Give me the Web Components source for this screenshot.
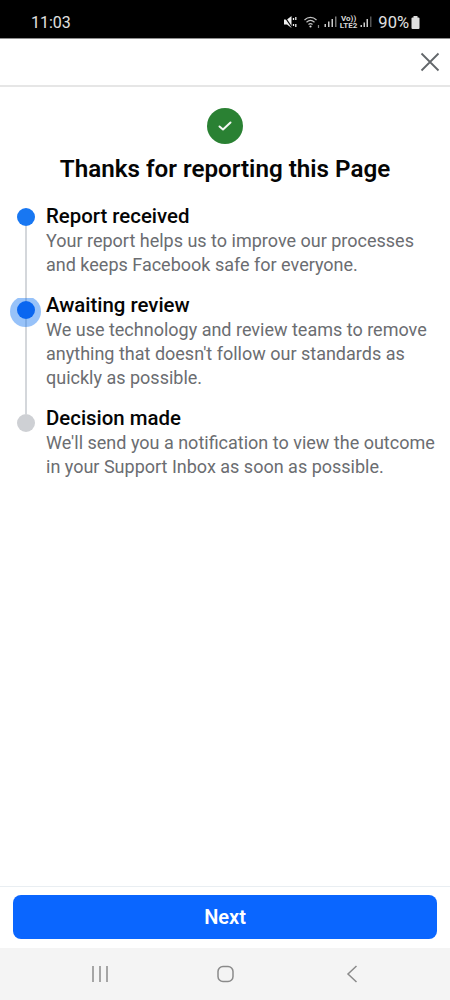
<!DOCTYPE html>
<html>
<head>
<meta charset="utf-8">
<title>Report</title>
<style>
  html, body { margin: 0; padding: 0; background: #fff; }
  body { font-family: Roboto, "Liberation Sans", sans-serif; }
</style>
</head>
<body>
<report-screen>
  <status-bar slot="top"></status-bar>
  <top-bar slot="top"></top-bar>
  <report-head>Thanks for reporting this Page</report-head>
  <report-step state="done" heading="Report received">Your report helps us to improve our processes and keeps Facebook safe for everyone.</report-step>
  <report-step state="active" heading="Awaiting review">We use technology and review teams to remove anything that doesn't follow our standards as quickly as possible.</report-step>
  <report-step state="todo" heading="Decision made">We'll send you a notification to view the outcome in your Support Inbox as soon as possible.</report-step>
  <next-bar slot="bottom">Next</next-bar>
  <nav-bar slot="bottom"></nav-bar>
</report-screen>

<script>
class ReportScreen extends HTMLElement {
  connectedCallback() {
    const sd = this.attachShadow({ mode: 'open' });
    sd.innerHTML = `<style>
      :host { display: flex; flex-direction: column; height: 1000px; width: 450px; overflow: hidden; }
      main { flex: 1; display: flex; flex-direction: column; }
    </style>
    <slot name="top"></slot>
    <main><slot></slot></main>
    <slot name="bottom"></slot>`;
  }
}

class StatusBar extends HTMLElement {
  connectedCallback() {
    const sd = this.attachShadow({ mode: 'open' });
    sd.innerHTML = `<style>
      :host { display: flex; align-items: center; justify-content: space-between; height: 38px; box-sizing: border-box;
        padding: 10px 30px 4px 31px; background: #000; color: #e0e0e0; font-size: 16px; }
      .right { display: flex; align-items: center; }
      .pct { font-size: 16.5px; margin-left: 6px; }
      svg { display: block; }
      .lte { font-size: 8px; line-height: 7px; font-weight: 700; text-align: center; margin-left: 3px; color: #d8d8d8; }
    </style>
    <span>11:03</span>
    <div class="right">
      <!-- mute -->
      <svg width="13" height="14" viewBox="0 0 13 14" fill="#eee">
        <path d="M0 4.500h3L7.500 1v12L3 9.500H0z"/>
        <path d="M0.500 1.500l7.500 11" stroke="#000" stroke-width="1.200"/>
        <path d="M9.500 3v2M9.500 9v2M11.800 2v3M11.800 9v3" stroke="#eee" stroke-width="1.300"/>
      </svg>
      <!-- wifi -->
      <svg width="16" height="14" viewBox="0 0 16 14" fill="none" stroke="#c4c4c4" stroke-width="1.200" style="margin-left:7px">
        <path d="M0.500 5c3.600-3.400 8.400-3.400 12 0M2.500 7.300c2.500-2.300 5.500-2.300 8 0M4.500 9.500c1.300-1.100 2.700-1.100 4 0"/>
        <circle cx="6.500" cy="11.500" r="1.100" fill="#ddd" stroke="none"/>
        <path d="M14.500 10v3" stroke="#888"/>
      </svg>
      <!-- signal one -->
      <svg width="13" height="12" viewBox="0 0 13 12" fill="#ccc" style="margin-left:4px">
        <rect x="0.500" y="8" width="1.500" height="3"/><rect x="4" y="5.500" width="1.500" height="5.500"/>
        <rect x="7.500" y="3" width="1.500" height="8"/><rect x="11" y="0.500" width="1.500" height="10.500" fill="#777"/>
      </svg>
      <div class="lte">Vo))<br>LTE2</div>
      <!-- signal two -->
      <svg width="12" height="12" viewBox="0 0 12 12" fill="#ccc" style="margin-left:3px">
        <rect x="0.500" y="9" width="1.500" height="2"/><rect x="3.500" y="6.500" width="1.500" height="4.500"/>
        <rect x="6.500" y="3" width="1.500" height="8"/><rect x="10" y="0.500" width="1.500" height="10.500" fill="#555"/>
      </svg>
      <span class="pct">90%</span>
      <!-- battery -->
      <svg width="9" height="13" viewBox="0 0 9 13" fill="#ddd" style="margin-left:2px">
        <rect x="2.500" y="0" width="4" height="2"/><rect x="0.500" y="1.500" width="8" height="11.500" rx="1"/>
      </svg>
    </div>`;
  }
}

class TopBar extends HTMLElement {
  connectedCallback() {
    const sd = this.attachShadow({ mode: 'open' });
    sd.innerHTML = `<style>
      :host { display: flex; align-items: center; justify-content: flex-end; height: 49px; box-sizing: border-box;
        padding: 0 10px 1px 0; background: #fff; border-top: 1px solid #8f8f8f; border-bottom: 2px solid #e6e6e6; }
      svg { display: block; }
    </style>
    <svg width="20" height="20" viewBox="0 0 20 20" fill="none" stroke="#62666a" stroke-width="1.800">
      <path d="M1.500 1.500l17 17M18.500 1.500l-17 17"/>
    </svg>`;
  }
}

class ReportHead extends HTMLElement {
  connectedCallback() {
    const sd = this.attachShadow({ mode: 'open' });
    sd.innerHTML = `<style>
      :host { display: flex; flex-direction: column; align-items: center; padding: 21px 0 20px; }
      .ok { width: 36px; height: 36px; border-radius: 50%; background: #2a8133; display: flex; align-items: center; justify-content: center; }
      h1 { margin: 10px 0 0; font: 600 24.2px/30px Roboto, "Liberation Sans", sans-serif; color: #050505; }
      svg { display: block; }
    </style>
    <div class="ok">
      <svg width="14" height="11" viewBox="0 0 14 11" fill="none" stroke="#f4f8f4" stroke-width="2" stroke-linecap="round" stroke-linejoin="round">
        <path d="M1.500 5.500l3.500 3L12.500 1.500"/>
      </svg>
    </div>
    <h1><slot></slot></h1>`;
  }
}

class ReportStep extends HTMLElement {
  connectedCallback() {
    const sd = this.attachShadow({ mode: 'open' });
    sd.innerHTML = `<style>
      :host { display: grid; grid-template-columns: 46px 1fr; }
      .rail { position: relative; display: flex; flex-direction: column; align-items: center; padding: 0 0 0 10px; box-sizing: border-box; width: 41px; }
      .stub { height: 8px; width: 2px; margin-left: 1px; background: #d4d7db; flex: none; }
      :host([state=done]) .stub { height: 4px; background: transparent; }
      .dot { width: 18px; height: 18px; border-radius: 50%; background: #1877f2; position: relative; flex: none; }
      :host([state=active]) .dot { background: #0a66f0; }
      /* halo is cut flat along its top edge in the reference */
      :host([state=active]) .halo { position: absolute; left: 10px; top: 3px; width: 31px; height: 31px; border-radius: 50%; background: #1877f2; opacity: .45; clip-path: inset(2px 0 0 0); }
      :host([state=todo]) .dot { background: #ced0d4; }
      .line { flex: 1; width: 2px; margin-left: 1px; background: #d4d7db; }
      :host([state=todo]) .line { display: none; }
      .text { padding-bottom: 16px; width: 396px; }
      h2 { margin: 0; font: 500 20.4px/25px Roboto, "Liberation Sans", sans-serif; color: #050505; }
      p { margin: 0; font: 400 18px/24px Roboto, "Liberation Sans", sans-serif; color: #6b6d71; }
    </style>
    <div class="rail"><div class="halo"></div><div class="stub"></div><div class="dot"></div><div class="line"></div></div>
    <div class="text">
      <h2>${this.getAttribute('heading')}</h2>
      <p><slot></slot></p>
    </div>`;
  }
}

class NextBar extends HTMLElement {
  connectedCallback() {
    const sd = this.attachShadow({ mode: 'open' });
    sd.innerHTML = `<style>
      :host { display: block; box-sizing: border-box; height: 62px; padding: 8px 13px 9px; background: #fff; border-top: 1px solid #e9eef2; }
      button { display: block; width: 100%; height: 44px; border: 0; border-radius: 8px; background: #0a66ff; color: #fff;
        font: 600 20px/44px Roboto, "Liberation Sans", sans-serif; padding: 0; }
    </style>
    <button><slot></slot></button>`;
  }
}

class NavBar extends HTMLElement {
  connectedCallback() {
    const sd = this.attachShadow({ mode: 'open' });
    sd.innerHTML = `<style>
      :host { display: flex; align-items: center; height: 52px; background: #f4f4f4; padding-left: 92px; }
      svg { display: block; }
    </style>
    <svg width="16" height="18" viewBox="0 0 16 18" fill="none" stroke="#8a8a8a" stroke-width="1.500"><path d="M1 1v16M8 1v16M15 1v16"/></svg>
    <svg width="17" height="18" viewBox="0 0 17 18" fill="none" stroke="#8a8a8a" stroke-width="1.500" style="margin-left:109px"><rect x="1" y="1.500" width="15" height="15" rx="5"/></svg>
    <svg width="12" height="18" viewBox="0 0 12 18" fill="none" stroke="#8a8a8a" stroke-width="1.500" style="margin-left:112px"><path d="M10.500 1L2 9l8.500 8"/></svg>`;
  }
}

customElements.define('report-screen', ReportScreen);
customElements.define('status-bar', StatusBar);
customElements.define('top-bar', TopBar);
customElements.define('report-head', ReportHead);
customElements.define('report-step', ReportStep);
customElements.define('next-bar', NextBar);
customElements.define('nav-bar', NavBar);
</script>
</body>
</html>
